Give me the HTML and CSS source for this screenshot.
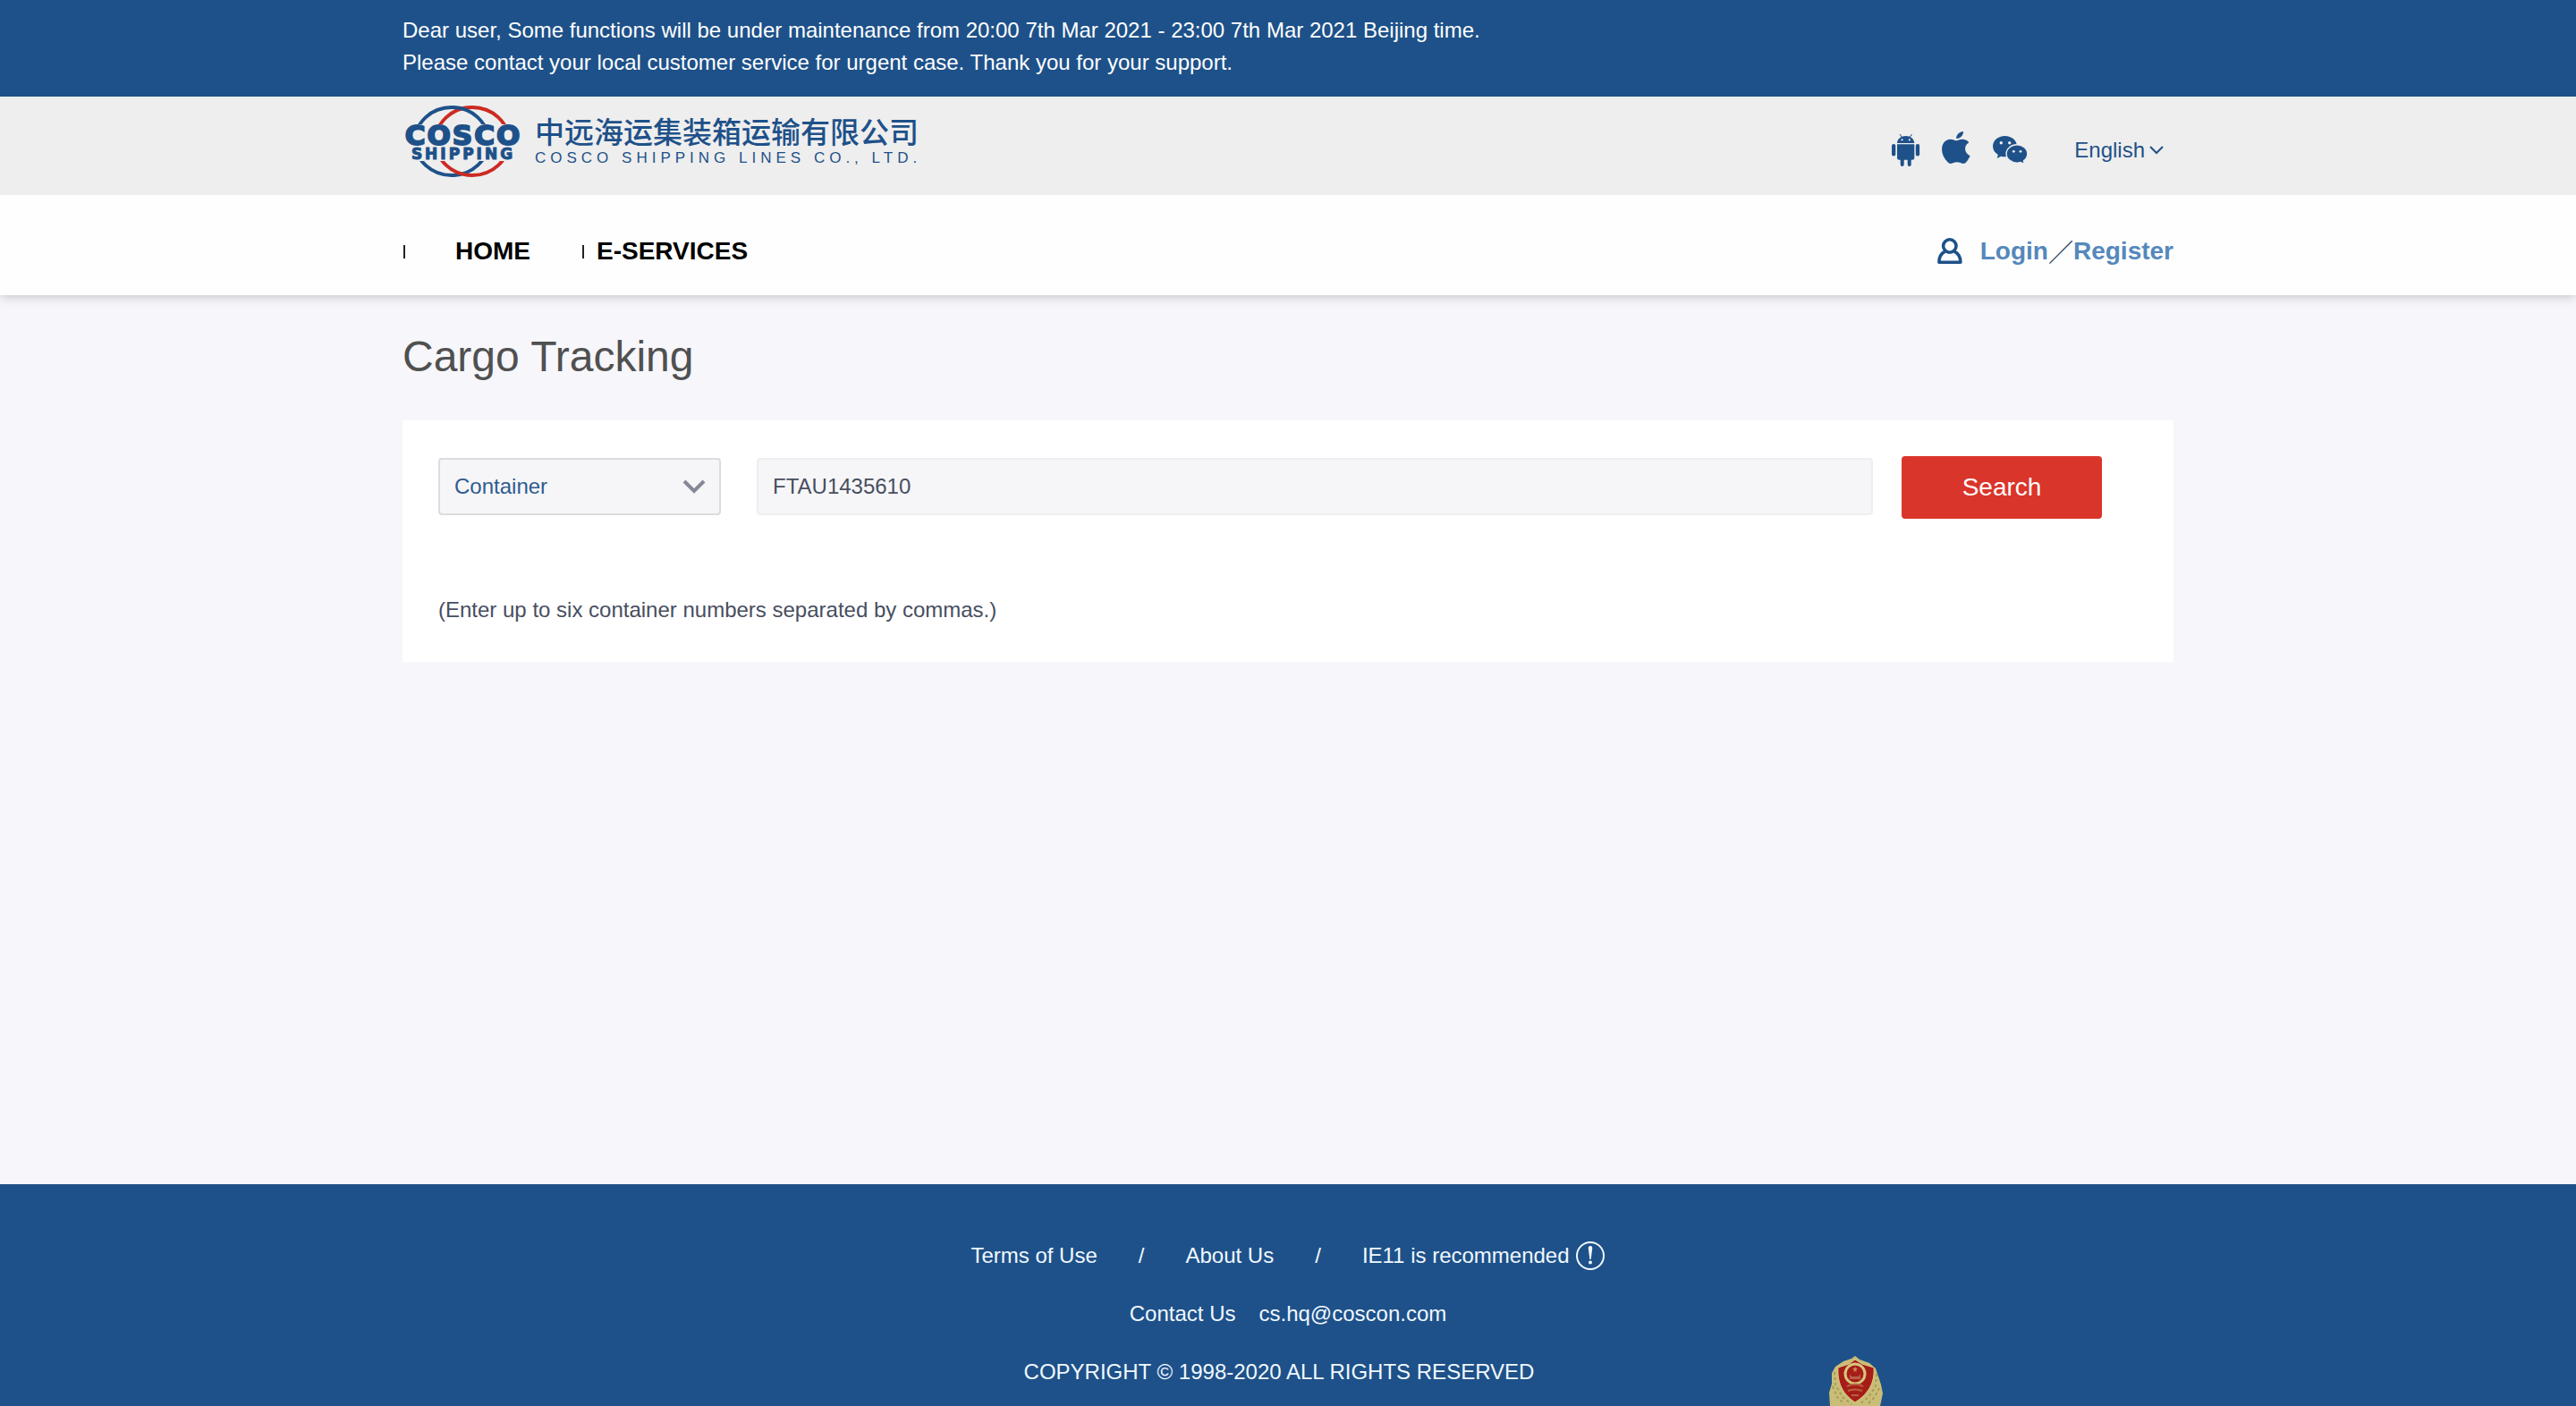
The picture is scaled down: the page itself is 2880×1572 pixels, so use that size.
FILE: index.html
```html
<!DOCTYPE html>
<html lang="en">
<head>
<meta charset="utf-8">
<title>Cargo Tracking - COSCO SHIPPING Lines</title>
<link rel="stylesheet" href="styles.css">
</head>
<body>
<div class="notice">
  <div class="container">
    <p>Dear user, Some functions will be under maintenance from 20:00 7th Mar 2021 - 23:00 7th Mar 2021 Beijing time.</p>
    <p>Please contact your local customer service for urgent case. Thank you for your support.</p>
  </div>
</div>
<header class="topbar">
  <div class="container topbar-row">
    <a class="brand" href="#">
      <svg class="brand-mark" width="134" height="84" viewBox="0 0 134 84">
        <defs>
          <clipPath id="cap-top"><rect x="0" y="0" width="134" height="23"/></clipPath>
          <clipPath id="cap-bottom"><rect x="0" y="64" width="134" height="20"/></clipPath>
        </defs>
        <g fill="none" stroke-width="4">
          <g clip-path="url(#cap-top)">
            <ellipse cx="78" cy="42" rx="41" ry="38" stroke="#cc2a22"/>
            <ellipse cx="55" cy="42" rx="41" ry="38" stroke="#1e5189"/>
          </g>
          <g clip-path="url(#cap-bottom)">
            <ellipse cx="55" cy="42" rx="41" ry="38" stroke="#1e5189"/>
            <ellipse cx="78" cy="42" rx="41" ry="38" stroke="#cc2a22"/>
          </g>
        </g>
        <text class="mark-name" x="68" y="46" text-anchor="middle">COSCO</text>
        <text class="mark-sub" x="68" y="62" text-anchor="middle">SHIPPING</text>
      </svg>
      <span class="brand-text">
        <span class="brand-zh" lang="zh">中远海运集装箱运输有限公司</span>
        <span class="brand-en">COSCO SHIPPING LINES CO., LTD.</span>
      </span>
    </a>
    <div class="tools">
      <a href="#" aria-label="Android app"><svg width="32" height="36" viewBox="0 0 32 36" fill="currentColor">
        <path d="M9 0l2.200 3.300M22.500 0l-2.200 3.300" stroke="currentColor" stroke-width="1"/>
        <path fill-rule="evenodd" d="M6 10C6.300 5 10.500 2 15.700 2S25 5 25.300 10zM11.500 5.200a1.100 1.100 0 1 0 0 2.200a1.100 1.100 0 0 0 0-2.200zM19.800 5.200a1.100 1.100 0 1 0 0 2.200a1.100 1.100 0 0 0 0-2.200z"/>
        <path d="M6 11.300h19.300v15a2.500 2.500 0 0 1-2.500 2.500h-1.100v5.200a2 2 0 0 1-4 0v-5.200h-4v5.200a2 2 0 0 1-4 0v-5.200h-1.200a2.500 2.500 0 0 1-2.500-2.500z"/>
        <rect x="0" y="11" width="4.300" height="13.500" rx="2.100"/><rect x="26.800" y="11" width="4.300" height="13.500" rx="2.100"/>
      </svg></a>
      <a class="tool-apple" href="#" aria-label="iOS app"><svg width="32" height="36" viewBox="0 0 32 36" fill="currentColor">
        <path d="M24 0c.3 4-3.500 8.200-7.800 8C15.700 4 19.800.3 24 0z"/>
        <path d="M16.300 10.200c1.500 0 3.800-1.700 7-1.500c2.900.1 5.400 1.300 7 3.600c-2.900 1.900-4.300 4.300-4.200 7.300c.1 3.500 2 6.200 5.400 7.700c-1 2.800-2.600 5-4.200 6.900c-1.300 1.400-2.700 1.900-4.400 1.600c-2-.4-3.500-1.500-6-1.500c-2.600 0-4 1.100-5.800 1.500c-1.800.4-3.400-.1-4.800-1.700C1.800 29.600-.3 24.200.1 18.800C.5 12.700 4.400 8.900 9.500 8.700c2.800-.1 5.200 1.500 6.800 1.500z"/>
      </svg></a>
      <a class="tool-wechat" href="#" aria-label="WeChat"><svg width="39" height="32" viewBox="0 0 39 32">
        <path fill="currentColor" d="M13.500 0C21 0 27 5 27 11.500S21 23.300 13.500 23.300c-1.500 0-2.900-.2-4.200-.6L4.700 25l1.100-4C2.200 18.900 0 15.500 0 11.600C0 5 6 0 13.500 0z"/>
        <path fill="currentColor" stroke="#eee" stroke-width="1.400" d="M27 9.700c6.500 0 11.800 4.500 11.800 10.200c0 3.100-1.700 5.900-4.300 7.800l.6 3.800l-4.200-2c-1.200.4-2.500.6-3.900.6c-6.500 0-11.900-4.500-11.900-10.200S20.500 9.700 27 9.700z"/>
        <g fill="#eee"><circle cx="9.300" cy="7.800" r="1.700"/><circle cx="18.700" cy="7.800" r="1.700"/><circle cx="23.300" cy="17.300" r="1.400"/><circle cx="31" cy="17.300" r="1.400"/></g>
      </svg></a>
      <button class="lang" type="button">English
        <svg width="18" height="12" viewBox="0 0 18 12" fill="none" stroke="currentColor" stroke-width="2"><path d="M2 2l7 7l7-7"/></svg>
      </button>
    </div>
  </div>
</header>
<nav class="mainnav">
  <div class="container nav-row">
    <ul class="menu">
      <li class="menu-home"><a href="#">HOME</a></li>
      <li class="menu-services"><a href="#">E-SERVICES</a></li>
    </ul>
    <div class="account">
      <svg width="28" height="30" viewBox="0 0 28 30" fill="none" stroke="#1e5189" stroke-width="3.600"><circle cx="13.800" cy="9" r="7.200"/><path stroke-linejoin="round" d="M8.500 15.200C4 17.500 2 21.500 1.900 27.200h24C25.800 21.500 23.500 17.500 19 15.200"/></svg>
      <a href="#">Login</a><span class="slash">／</span><a href="#">Register</a>
    </div>
  </div>
</nav>
<main class="container content">
  <h1>Cargo Tracking</h1>
  <form class="card">
    <div class="search-row">
      <div class="picker">
        <select aria-label="Search by"><option>Container</option></select>
        <svg width="26" height="16" viewBox="0 0 26 16" fill="none" stroke="#858896" stroke-width="4"><path d="M2 2l11 11L24 2"/></svg>
      </div>
      <input class="number" type="text" aria-label="Container numbers" value="FTAU1435610">
      <button class="search" type="submit">Search</button>
    </div>
    <p class="hint">(Enter up to six container numbers separated by commas.)</p>
  </form>
</main>
<footer class="footer">
  <div class="links">
    <a href="#">Terms of Use</a><span>/</span><a href="#">About Us</a><span>/</span>
    <span class="advice">IE11 is recommended
      <svg width="34" height="34" viewBox="0 0 34 34"><circle cx="17" cy="17" r="15" fill="none" stroke="currentColor" stroke-width="2"/><path fill="currentColor" d="M17 6c1.700 0 2.400 1.200 2.200 3l-1.500 12h-1.400L14.800 9c-.2-1.800.5-3 2.200-3z"/><circle cx="17" cy="24.500" r="2" fill="currentColor"/></svg>
    </span>
  </div>
  <div class="contact"><span>Contact Us</span><a href="#">cs.hq@coscon.com</a></div>
  <div class="copyright">COPYRIGHT © 1998-2020 ALL RIGHTS RESERVED</div>
  <svg class="emblem" width="60" height="56" viewBox="0 0 60 56">
    <path fill="#c9bd78" d="M29 0l5 4l11 4l7 6l3 9l3 9l2 10l-3 14H1L0 41l3-10V19l4-7l9-6l9-3z"/>
    <g fill="none" stroke="#a89b58" stroke-width="2" stroke-dasharray="3 3"><path d="M6 18l1 14l8 14l10 8M53 20l-1 14l-8 12l-10 8"/><path d="M4 34l5 12l8 8M56 36l-5 10l-8 8"/></g>
    <path fill="#a61d18" stroke="#d8cc86" d="M29 4l8 5l13 4c1 15-4 28-21 39C14 42 9 29 10 13l12-4z"/>
    <circle cx="29" cy="20" r="11" fill="#a61d18" stroke="#d6c67c" stroke-width="3"/>
    <path fill="#d08a50" d="M29 12l1 2h2l-2 2l1 2l-2-1l-2 1l1-2l-2-2h2z"/>
    <path fill="#b8604a" d="M23 20l2 3h8l2-3v6H23z"/>
    <path d="M20 34c6-3 12-3 18 0M21 39c5-2 11-2 16 0M25 44h8" fill="none" stroke="#b8603f" stroke-width="2"/>
  </svg>
</footer>
</body>
</html>
```
FILE: styles.css
```css
* { box-sizing: border-box; margin: 0; padding: 0; }
body {
  display: flex;
  flex-direction: column;
  min-height: 100vh;
  background: #f6f6fb;
  color: #484e60;
  font: 24px/36px "Liberation Sans", "Noto Sans CJK SC", Arial, sans-serif;
}
a { color: inherit; text-decoration: none; }
svg { display: block; flex: none; }
button, input, select { font: inherit; color: inherit; }
ul { list-style: none; }
.container { width: 100%; max-width: 1980px; margin: 0 auto; }

.notice { padding: 16px 0 20px; background: #1e5189; color: #fff; }

.topbar { position: relative; z-index: 1; background: #eee; color: #1e5189; }
.topbar-row { display: flex; justify-content: space-between; height: 110px; }
.brand { display: flex; gap: 14px; padding-top: 8px; }
.mark-name, .mark-sub { fill: #1e5189; stroke: #1e5189; font-family: "DejaVu Sans", sans-serif; font-weight: 700; }
.mark-name { font-size: 31px; letter-spacing: 2px; stroke-width: 2; }
.mark-sub { font-size: 17px; letter-spacing: 3px; stroke-width: 1; }
.brand-text { display: flex; flex-direction: column; padding-top: 9px; }
.brand-zh { font: 500 33px/42px "Noto Sans CJK SC", sans-serif; }
.brand-en { font-size: 17px; line-height: 20px; letter-spacing: 5px; }
.tools { display: flex; align-items: center; padding: 10px 10px 0 0; }
.tool-apple { margin: 0 25px 6px 24px; }
.lang { display: flex; align-items: center; gap: 4px; margin-left: 52px; border: 0; background: none; }

.mainnav { background: #fefefe; color: #000; box-shadow: 0 2px 12px rgba(0, 0, 0, 0.2); font-size: 28px; font-weight: 700; }
.nav-row { display: flex; justify-content: space-between; align-items: center; height: 112px; padding-top: 14px; }
.menu { display: flex; }
.menu li { display: flex; align-items: center; }
.menu li::before { content: ""; width: 2px; height: 15px; background: #222; }
.menu-home { gap: 56px; width: 200px; padding-left: 1px; }
.menu-services { gap: 14px; padding-left: 1px; }
.account { display: flex; align-items: center; color: #5588bb; }
.account svg { margin-right: 20px; }
.slash { color: #2c4261; font-family: "Noto Sans CJK SC", sans-serif; font-weight: 500; }

.content { flex: 1; }
h1 { padding: 40px 0 42px; color: #505050; font-size: 48px; font-weight: 400; line-height: 58px; }
.card { min-height: 270px; padding: 40px 80px 32px 40px; background: #fff; }
.search-row { display: flex; align-items: center; }
.picker { position: relative; width: 316px; margin: 0 40px 2px 0; }
.picker select, .number { display: block; width: 100%; height: 64px; padding: 0 16px; border: 2px solid #dcdce0; border-radius: 4px; background: #f6f6f8; outline: 0; }
.picker select { appearance: none; color: #2f5c90; }
.picker svg { position: absolute; right: 17px; top: 24px; pointer-events: none; }
.number { flex: 1; margin-bottom: 2px; border-color: #eeeef0; }
.search { width: 224px; height: 70px; margin-left: 32px; border: 0; border-radius: 4px; background: #da352b; color: #fff; font-size: 28px; }
.hint { margin-top: 84px; }

.footer { position: relative; overflow: hidden; display: flex; flex-direction: column; align-items: center; gap: 29px; padding: 62px 0 20px; background: #1e5189; color: #f0f8ff; }
.links { display: flex; gap: 46px; align-items: center; }
.advice { display: flex; align-items: center; gap: 6px; }
.contact { display: flex; gap: 26px; }
.copyright { padding-right: 20px; }
.emblem { position: absolute; left: 71%; bottom: 0; }
```
